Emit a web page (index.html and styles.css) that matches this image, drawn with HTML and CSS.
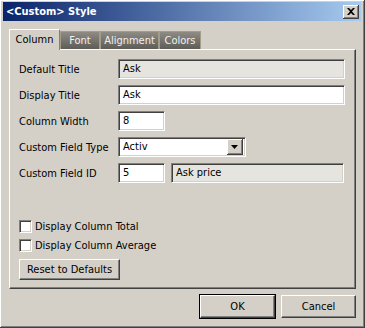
FILE: index.html
```html
<!DOCTYPE html>
<html lang="en">
<head>
    <meta charset="UTF-8">
    <title>&lt;Custom&gt; Style</title>
    <link rel="stylesheet" href="styles.css">
</head>
<body>
    <div class="window">
        <div class="titlebar">
            <span class="title">&lt;Custom&gt; Style</span>
            <div class="close">
                <svg width="8" height="7" viewBox="0 0 8 7">
                    <path d="M0 0h2l2 2 2-2h2L5 3.5 8 7H6L4 5 2 7H0l3-3.5z" fill="#000"></path>
                </svg>
            </div>
        </div>
        <div class="content">
            <div class="tabs">
                <div class="tab active">Column</div>
                <div class="tab">Font</div>
                <div class="tab">Alignment</div>
                <div class="tab">Colors</div>
            </div>
            <div class="panel">
                <div class="fields">
                    <div class="row">
                        <label>Default Title</label>
                        <div class="field wide disabled">Ask</div>
                    </div>
                    <div class="row">
                        <label>Display Title</label>
                        <div class="field wide">Ask</div>
                    </div>
                    <div class="row">
                        <label>Column Width</label>
                        <div class="field small">8</div>
                    </div>
                    <div class="row">
                        <label>Custom Field Type</label>
                        <div class="field select">
                            <span>Activ</span>
                            <div class="drop">
                                <svg width="7" height="4" viewBox="0 0 7 4"><path d="M0 0h7L3.5 4z" fill="#000"></path></svg>
                            </div>
                        </div>
                    </div>
                    <div class="row">
                        <label>Custom Field ID</label>
                        <div class="field small">5</div>
                        <div class="field desc disabled">Ask price</div>
                    </div>
                </div>
                <div class="checks">
                    <div class="check"><span class="box"></span>Display Column Total</div>
                    <div class="check"><span class="box"></span>Display Column Average</div>
                </div>
                <div class="btn reset">Reset to Defaults</div>
            </div>
            <div class="actions">
                <div class="btn default">OK</div>
                <div class="btn">Cancel</div>
            </div>
        </div>
    </div>
</body>
</html>
```
FILE: styles.css
```css
body {
    margin: 0;
    background-color: #d4d0c8;
    font-family: Tahoma, "DejaVu Sans Condensed", "Liberation Sans", sans-serif;
    font-size: 11px;
    color: #000;
}
.window {
    width: 365px;
    height: 328px;
    box-sizing: border-box;
    background-color: #d4d0c8;
    border-right: 1px solid #404040;
    border-bottom: 1px solid #404040;
    box-shadow: inset 1px 1px 0 #fff, inset -1px -1px 0 #808080;
    padding: 2px 3px 0 3px;
}
.titlebar {
    height: 19px;
    background: linear-gradient(to right, #0a246a, #a6caf0);
    display: flex;
    align-items: center;
    justify-content: space-between;
    padding: 0 2px 0 3px;
}
.title {
    color: #fff;
    font-weight: bold;
    font-size: 11px;
}
.close {
    width: 16px;
    height: 14px;
    box-sizing: border-box;
    background-color: #d4d0c8;
    border-right: 1px solid #404040;
    border-bottom: 1px solid #404040;
    box-shadow: inset 1px 1px 0 #fff, inset -1px -1px 0 #808080;
    display: flex;
    align-items: center;
    justify-content: center;
}
.content {
    padding: 8px 5px 0 6px;
}
.tabs {
    display: flex;
    align-items: flex-end;
    height: 20px;
}
.tab {
    height: 18px;
    box-sizing: border-box;
    padding: 0 2px;
    text-align: center;
    line-height: 17px;
    color: #f0f0f0;
    background: linear-gradient(to bottom, #8e8b84, #5e5c57);
    border: 1px solid #a39c86;
    border-bottom: none;
    white-space: nowrap;
}
.tab.active {
    height: 21px;
    width: 51px;
    color: #000;
    background: #d4d0c8;
    border: none;
    border-top: 1px solid #fff;
    border-left: 1px solid #fff;
    border-right: 1px solid #808080;
    position: relative;
    z-index: 1;
    margin-bottom: -1px;
    line-height: 19px;
}
.tab:nth-child(2) { width: 40px; }
.tab:nth-child(3) { width: 59px; }
.tab:nth-child(4) { width: 42px; }
.panel {
    width: 347px;
    height: 240px;
    box-sizing: border-box;
    border-top: 1px solid #fff;
    border-left: 1px solid #fff;
    border-right: 1px solid #404040;
    border-bottom: 1px solid #404040;
    box-shadow: inset -1px -1px 0 #808080;
    padding: 9px 0 0 9px;
}
.fields {
    display: flex;
    flex-direction: column;
    gap: 6px;
}
.row {
    display: flex;
    align-items: center;
    height: 20px;
}
.row label {
    width: 99px;
}
.field {
    height: 20px;
    box-sizing: border-box;
    background-color: #fff;
    border-top: 1px solid #808080;
    border-left: 1px solid #808080;
    border-right: 1px solid #fff;
    border-bottom: 1px solid #fff;
    box-shadow: inset 1px 1px 0 #404040, inset -1px -1px 0 #d4d0c8;
    padding: 0 4px;
    line-height: 18px;
}
.field.disabled {
    background-color: #e6e4df;
}
.field.wide { width: 227px; }
.field.small { width: 47px; }
.field.desc {
    width: 173px;
    margin-left: 6px;
}
.field.select {
    width: 128px;
    display: flex;
    justify-content: space-between;
    align-items: center;
    padding-right: 2px;
}
.drop {
    width: 16px;
    height: 16px;
    box-sizing: border-box;
    background-color: #d4d0c8;
    border-right: 1px solid #404040;
    border-bottom: 1px solid #404040;
    box-shadow: inset 1px 1px 0 #fff, inset -1px -1px 0 #808080;
    display: flex;
    align-items: center;
    justify-content: center;
}
.checks {
    margin-top: 37px;
    display: flex;
    flex-direction: column;
    gap: 6px;
}
.check {
    display: flex;
    align-items: center;
    height: 13px;
}
.box {
    width: 13px;
    height: 13px;
    box-sizing: border-box;
    background-color: #fff;
    border-top: 1px solid #808080;
    border-left: 1px solid #808080;
    border-right: 1px solid #fff;
    border-bottom: 1px solid #fff;
    box-shadow: inset 1px 1px 0 #404040, inset -1px -1px 0 #d4d0c8;
    margin-right: 3px;
}
.btn {
    height: 23px;
    box-sizing: border-box;
    background-color: #d4d0c8;
    border-top: 1px solid #fff;
    border-left: 1px solid #fff;
    border-right: 1px solid #404040;
    border-bottom: 1px solid #404040;
    box-shadow: inset -1px -1px 0 #808080;
    display: flex;
    align-items: center;
    justify-content: center;
    width: 75px;
}
.btn.reset {
    margin-top: 7px;
    width: 101px;
    height: 21px;
}
.btn.default {
    outline: 1px solid #000;
}
.actions {
    display: flex;
    justify-content: flex-end;
    gap: 6px;
    width: 347px;
    margin-top: 6px;
}
```
